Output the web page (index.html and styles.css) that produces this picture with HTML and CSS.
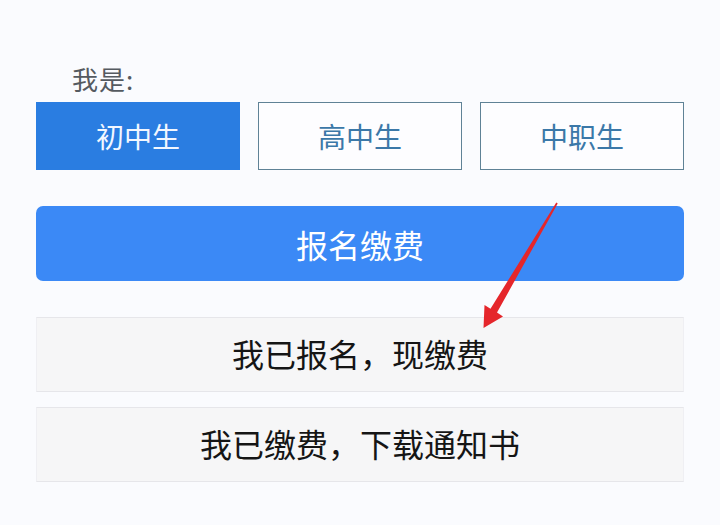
FILE: index.html
```html
<!DOCTYPE html>
<html lang="zh-CN">
<head>
    <meta charset="UTF-8">
    <meta name="viewport" content="width=device-width, initial-scale=1.0">
    <title>报名缴费</title>
    <link rel="stylesheet" href="styles.css">
</head>
<body>
    <div class="page">
        <div class="label">我是:</div>

        <div class="types">
            <button class="type active">初中生</button>
            <button class="type">高中生</button>
            <button class="type">中职生</button>
        </div>

        <button class="primary">报名缴费</button>

        <button class="plain first">我已报名，现缴费</button>
        <button class="plain">我已缴费，下载通知书</button>

        <!-- red hint arrow drawn over the buttons -->
        <svg class="arrow" width="720" height="525" viewBox="0 0 720 525">
            <polygon fill="#e5262b" points="556.3,202.5 557.7,203.5 497,312.5 503,316.5 483.5,328 484.5,305 490.5,308.8"/>
        </svg>
    </div>
</body>
</html>
```

FILE: styles.css
```css
body {
    margin: 0;
    background-color: #fafbfe;
    font-family: "Noto Sans CJK SC", "Noto Sans", sans-serif;
}
.page {
    position: relative;
    width: 720px;
    height: 525px;
    box-sizing: border-box;
    padding: 62px 36px 0;
}
.label {
    margin-left: 36px;
    font-size: 26px;
    line-height: 34px;
    color: #555a60;
    height: 40px;
    letter-spacing: 1px;
}
.types {
    display: grid;
    grid-template-columns: repeat(3, 1fr);
    gap: 18px;
}
button {
    font-family: inherit;
    cursor: pointer;
    display: block;
    width: 100%;
    margin: 0;
    padding: 0;
}
.type {
    height: 68px;
    background-color: #fdfdff;
    border: 1px solid #5f8296;
    color: #3b78a8;
    font-size: 28px;
}
.type.active {
    background-color: #2a7de1;
    border-color: #2a7de1;
    color: #f2f7ff;
}
.primary {
    margin-top: 36px;
    height: 75px;
    border: none;
    border-radius: 7px;
    background-color: #3b89f6;
    color: #fff;
    font-size: 32px;
}
.plain {
    margin-top: 15px;
    height: 75px;
    padding-bottom: 4px;
    background-color: #f6f6f7;
    border: 1px solid #e6e6ea;
    border-left-color: #efeff3;
    border-right-color: #efeff3;
    color: #151515;
    font-size: 32px;
}
.plain.first {
    margin-top: 36px;
}
.arrow {
    position: absolute;
    left: 0;
    top: 0;
    pointer-events: none;
}
```
